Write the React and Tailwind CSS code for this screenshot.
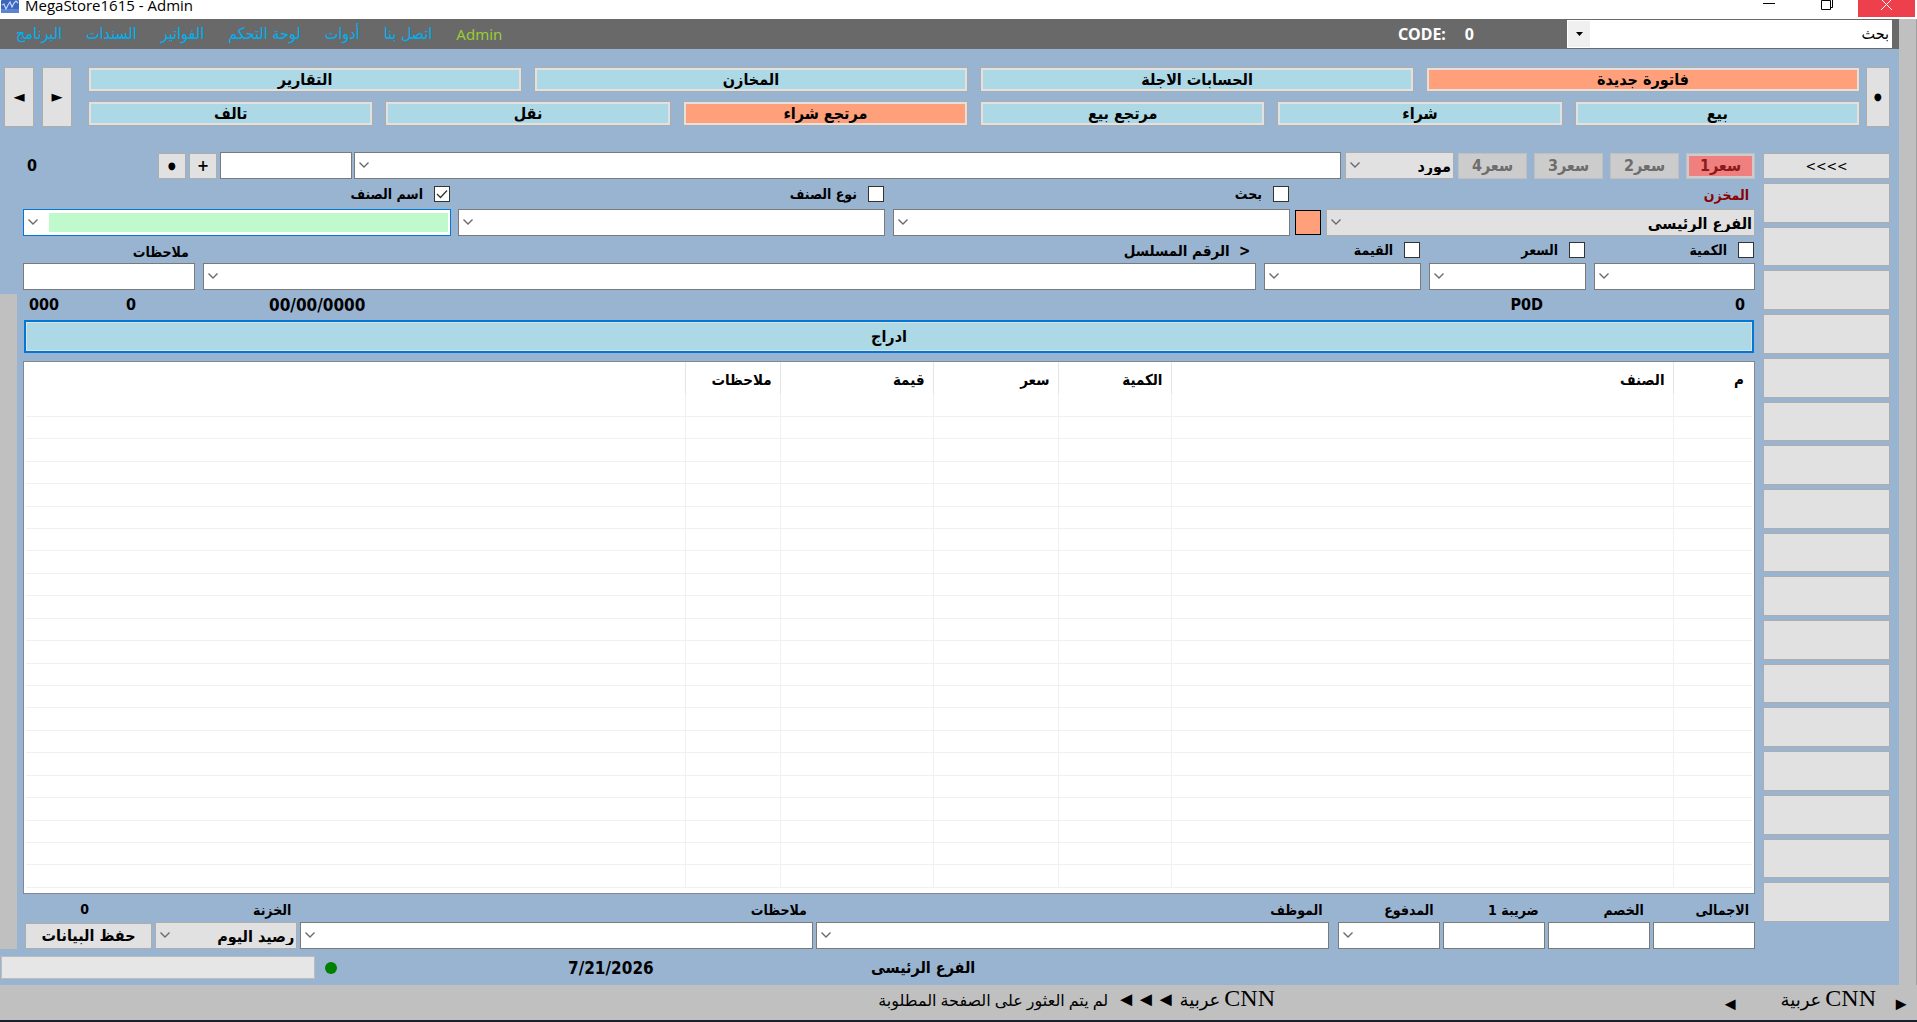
import React from 'react';
import clsx from 'clsx';

const mainTabs = [
  { name: 'فاتورة جديدة', active: true },
  { name: 'الحسابات الاجلة' },
  { name: 'المخازن' },
  { name: 'التقارير' },
];

const invoiceTabs = [
  { name: 'بيع' },
  { name: 'شراء' },
  { name: 'مرتجع بيع' },
  { name: 'مرتجع شراء', active: true },
  { name: 'نقل' },
  { name: 'تالف' },
];

const menuItems = ['البرنامج', 'السندات', 'الفواتير', 'لوحة التحكم', 'أدوات', 'اتصل بنا'];

const columns = [
  { name: 'م', width: 'w-[79px]' },
  { name: 'الصنف', width: 'w-[502px]' },
  { name: 'الكمية', width: 'w-[113px]' },
  { name: 'سعر', width: 'w-[125px]' },
  { name: 'قيمة', width: 'w-[153px]' },
  { name: 'ملاحظات', width: 'w-[95px]' },
  { name: '', width: '' },
];

const Chevron = () => (
  <svg className="absolute left-[3px] top-2 pointer-events-none" width="12" height="8" viewBox="0 0 12 8">
    <path d="M1.5 1.5 L6 6 L10.5 1.5" fill="none" stroke="#6b6b6b" strokeWidth="1.4" />
  </svg>
);

const TabButton = ({ name, active }) => (
  <button
    className={clsx(
      'flex-1 h-[25px] border border-[#adadad] leading-none shadow-[inset_0_0_0_2px_#e1e1e1]',
      active ? 'bg-[#ffa07a]' : 'bg-[#add8e6]'
    )}
  >
    {name}
  </button>
);

const GrayButton = ({ children, className, ...props }) => (
  <button className={clsx('bg-[#e1e1e1] border border-[#adadad] leading-none', className)} {...props}>
    {children}
  </button>
);

// look: plain (white), gray (flat list) or focus (blue border, green text area)
const Combo = ({ id, label, value = '', look = 'plain', className }) => (
  <div
    className={clsx(
      'relative flex h-[27px] border',
      look === 'plain' && 'bg-white border-[#7a7a7a]',
      look === 'gray' && 'bg-[#e1e1e1] border-[#adadad]',
      look === 'focus' && 'bg-white border-[#0078d7]',
      className
    )}
  >
    <select
      id={id}
      aria-label={label}
      className={clsx(
        'flex-1 min-w-0 appearance-none outline-none pr-0.5 leading-none',
        look === 'gray' && 'pt-0.5',
        look === 'focus' && 'bg-[#c0f9cb] ml-[25px] mr-0.5 my-[3px]'
      )}
    >
      <option>{value}</option>
    </select>
    <Chevron />
  </div>
);

const TextBox = ({ id, label, className }) => (
  <input
    id={id}
    type="text"
    aria-label={label}
    className={clsx('h-[27px] w-full min-w-0 bg-white border border-[#7a7a7a] px-1 outline-none', className)}
  />
);

const Check = ({ children, checked }) => (
  <label className="flex items-center gap-[11px] pr-px">
    <span className="relative size-4">
      <input
        type="checkbox"
        defaultChecked={checked}
        className="block size-4 appearance-none bg-white border border-[#333]"
      />
      {checked && (
        <svg className="absolute inset-0 pointer-events-none" width="16" height="16" viewBox="0 0 16 16">
          <path d="M3 8 L6.5 11.5 L13 4.5" fill="none" stroke="#333" strokeWidth="1.3" />
        </svg>
      )}
    </span>
    {children}
  </label>
);

const Field = ({ head, children, size = 'h-[27px]', className }) => (
  <div className={clsx('flex flex-col min-w-0', className)}>
    <div className={clsx('flex items-center text-[14px] leading-none', size)}>{head}</div>
    {children}
  </div>
);

const TitleBar = () => (
  <header dir="ltr" className="flex h-[19px] bg-white overflow-hidden font-['Open_Sans',sans-serif] font-normal text-[15px]">
    <svg className="ml-px shrink-0" width="18" height="13" viewBox="0 0 18 13">
      <rect width="18" height="13" rx="1" fill="#3c66bd" />
      <rect y="9" width="18" height="4" fill="#5d84d0" />
      <path d="M1 5 L3 4 L5 9 L7 5 L9 2 L11 7 L13 3 L15 1 L17 3" fill="none" stroke="#c3d6fa" strokeWidth="1.2" />
    </svg>
    <h1 className="ml-[6px] leading-[11px] text-black">MegaStore1615 - Admin</h1>
    <div className="flex ml-auto mr-0.5">
      <button aria-label="Minimize" className="w-[58px] h-[17px]">
        <svg width="58" height="17" viewBox="0 0 58 17">
          <path d="M21 3.5 H33" stroke="#000" />
        </svg>
      </button>
      <button aria-label="Restore" className="w-[58px] h-[17px]">
        <svg width="58" height="17" viewBox="0 0 58 17">
          <path d="M21.5 0.5 H30.5 V9.5 H21.5 Z M32.5 0 V7.5 H31" fill="none" stroke="#000" />
        </svg>
      </button>
      <button aria-label="Close" className="w-[57px] h-[17px] bg-[#ee404c]">
        <svg width="57" height="17" viewBox="0 0 57 17">
          <path d="M23 -1 L34 10 M34 -1 L23 10" stroke="#fff" />
        </svg>
      </button>
    </div>
  </header>
);

const MenuBar = () => (
  <div className="flex items-center h-[30px] bg-[#696969] pr-[7px] pl-4">
    <div className="relative flex w-[325px] h-[28px] bg-white">
      <select aria-label="بحث" className="flex-1 appearance-none outline-none pr-[3px] text-[16px] font-normal text-black">
        <option>بحث</option>
      </select>
      <span className="absolute left-px top-px bottom-px w-[22px] bg-[#f0f0f0] flex items-center justify-center pointer-events-none">
        <svg width="7" height="4" viewBox="0 0 7 4">
          <path d="M0 0 H7 L3.5 4 Z" fill="#000" />
        </svg>
      </span>
    </div>
    <p dir="ltr" className="flex gap-[19px] mr-[93px] text-white font-['Noto_Sans',sans-serif] text-[16px]">
      <span>CODE:</span>
      <span>0</span>
    </p>
    <nav dir="ltr" className="flex gap-6 mr-auto font-normal text-[#00b0f0] font-['DejaVu_Sans_Condensed','DejaVu_Sans',sans-serif]">
      {menuItems.map((item) => (
        <a key={item} href="#">{item}</a>
      ))}
      <a href="#" className="text-[#9acd32] font-['Noto_Sans',sans-serif] text-[15px]">Admin</a>
    </nav>
  </div>
);

const TabsArea = () => (
  <div className="flex pt-[18px] pr-[9px] pl-1">
    <GrayButton className="w-6 h-[60px] ml-1.5 text-[10px]">●</GrayButton>
    <div className="flex-1 flex flex-col gap-[9px]">
      <div className="flex gap-3">
        {mainTabs.map((tab) => <TabButton key={tab.name} {...tab} />)}
      </div>
      <div className="flex gap-3">
        {invoiceTabs.map((tab) => <TabButton key={tab.name} {...tab} />)}
      </div>
    </div>
    <div className="flex gap-2 mr-4">
      <GrayButton className="w-[30px] h-[60px]">►</GrayButton>
      <GrayButton className="w-[30px] h-[60px]">◄</GrayButton>
    </div>
  </div>
);

const SideButtons = () => (
  <div className="flex flex-col gap-1 w-[127px] ml-2 mb-[27px] shrink-0">
    <GrayButton className="h-[26px] mt-px font-normal text-[14px]" dir="ltr">&lt;&lt;&lt;&lt;</GrayButton>
    {Array.from({ length: 17 }, (_, i) => (
      <GrayButton key={i} className="flex-1" aria-label={`زر ${i + 1}`} />
    ))}
  </div>
);

const PartyRow = () => (
  <div className="flex pl-[23px]">
    <div className="flex gap-[7px] text-[#6d6d6d]">
      <button className="w-[69px] h-[26px] mt-px border border-[#bfbfbf] bg-[#f08080] text-[#8b1a1a] leading-none shadow-[inset_0_0_0_2px_#cccccc]">
        سعر1
      </button>
      {['سعر2', 'سعر3', 'سعر4'].map((p) => (
        <button key={p} disabled className="w-[69px] h-[26px] mt-px border border-[#bfbfbf] bg-[#cccccc] leading-none">
          {p}
        </button>
      ))}
    </div>
    <Combo look="gray" value="مورد" label="نوع العميل" className="w-[109px] mr-1" />
    <Combo label="اسم المورد" className="flex-1 mr-1" />
    <div className="w-[132px] mr-0.5">
      <TextBox label="كود المورد" />
    </div>
    <GrayButton className="w-7 h-[26px] mt-px mr-[3px]">+</GrayButton>
    <GrayButton className="w-7 h-[26px] mt-px mr-[3px] text-[10px]">●</GrayButton>
    <span dir="ltr" className="w-[135px] pl-1 pt-0.5">0</span>
  </div>
);

const ItemRows = () => (
  <div className="pl-[23px]">
    <div className="grid grid-cols-[429fr_26px_397fr_430fr_430fr] gap-x-[5px]">
      <Field size="h-[30px]" head={<label htmlFor="store" className="pr-1.5 pt-0.5 text-[#8b0000]">المخزن</label>}>
        <Combo id="store" look="gray" value="الفرع الرئيسى" />
      </Field>
      <button aria-label="لون" className="mt-[31px] h-[25px] bg-[#ffa07a] border border-black" />
      <Field size="h-[30px]" head={<Check>بحث</Check>}>
        <Combo label="بحث" />
      </Field>
      <Field size="h-[30px]" className="mr-[3px]" head={<Check>نوع الصنف</Check>}>
        <Combo label="نوع الصنف" />
      </Field>
      <Field size="h-[30px]" className="mr-0.5" head={<Check checked>اسم الصنف</Check>}>
        <Combo look="focus" label="اسم الصنف" />
      </Field>
    </div>
    <div className="grid grid-cols-[161fr_157fr_157fr_1054fr_172fr] gap-x-2">
      <Field head={<Check>الكمية</Check>}>
        <Combo label="الكمية" />
      </Field>
      <Field head={<Check>السعر</Check>}>
        <Combo label="السعر" />
      </Field>
      <Field head={<Check>القيمة</Check>}>
        <Combo label="القيمة" />
      </Field>
      <Field head={<label htmlFor="serial" className="pr-1.5 pt-1 text-[15px]">&lt;&nbsp; الرقم المسلسل</label>}>
        <Combo id="serial" />
      </Field>
      <Field head={<label htmlFor="notes" className="pr-1.5 pt-1">ملاحظات</label>}>
        <TextBox id="notes" />
      </Field>
    </div>
  </div>
);

const ItemsTable = () => (
  <div className="mt-2 h-[533px] bg-white border border-[#828790] px-0.5">
    <table className="w-full h-[526px] table-fixed border-collapse">
      <thead>
        <tr className="h-8">
          {columns.map((col, i) => (
            <th
              key={i}
              className={clsx('p-0 pr-2 pt-1 text-right align-middle text-[15px] leading-none border-[#e5e5e5]', i < 6 && 'border-l', col.width)}
            >
              {col.name}
            </th>
          ))}
        </tr>
      </thead>
      <tbody>
        {Array.from({ length: 22 }, (_, r) => (
          <tr key={r} className="h-[22px] border-b border-[#f0f0f0]">
            {columns.map((col, i) => (
              <td key={i} className={clsx('p-0 border-[#f0f0f0]', i < 6 && 'border-l')} />
            ))}
          </tr>
        ))}
      </tbody>
    </table>
  </div>
);

const TotalsRow = () => (
  <div className="grid grid-cols-[102fr_102fr_102fr_102fr_518fr_512fr_142fr_127fr] gap-x-[3px] pl-0.5">
    <Field size="h-7" head={<label htmlFor="total" className="pr-1.5 pt-1">الاجمالى</label>}>
      <TextBox id="total" />
    </Field>
    <Field size="h-7" head={<label htmlFor="discount" className="pr-1.5 pt-1">الخصم</label>}>
      <TextBox id="discount" />
    </Field>
    <Field size="h-7" head={<label htmlFor="tax" className="pr-1.5 pt-1">ضريبة 1</label>}>
      <TextBox id="tax" />
    </Field>
    <Field size="h-7" head={<label htmlFor="paid" className="pr-1.5 pt-1">المدفوع</label>}>
      <Combo id="paid" />
    </Field>
    <Field size="h-7" className="mr-1.5" head={<label htmlFor="employee" className="pr-1.5 pt-1">الموظف</label>}>
      <Combo id="employee" />
    </Field>
    <Field size="h-7" head={<label htmlFor="remarks" className="pr-1.5 pt-1">ملاحظات</label>}>
      <Combo id="remarks" />
    </Field>
    <Field size="h-7" head={<label htmlFor="safe" className="pr-1.5 pt-1">الخزنة</label>}>
      <Combo id="safe" look="gray" value="رصيد اليوم" />
    </Field>
    <Field size="h-7" head={<span className="mx-auto pr-2 pt-0.5">0</span>}>
      <GrayButton className="h-[26px] mt-px">حفظ البيانات</GrayButton>
    </Field>
  </div>
);

const StatusBar = () => (
  <div dir="ltr" className="flex items-center h-[35px] pl-px pt-0.5">
    <div className="w-[314px] h-[23px] bg-[#e6e6e6] border border-[#bcbcbc]" />
    <span className="size-3 rounded-full bg-[#008000] ml-2.5" />
    <span className="ml-[231px] w-[303px] text-[17px]">7/21/2026</span>
    <span>الفرع الرئيسى</span>
  </div>
);

const Ticker = () => (
  <footer className="flex items-center h-[37px] bg-[#c0c0c0] border-b-2 border-[#1a212b] pr-[7px] pb-1.5 font-['Liberation_Serif','DejaVu_Sans',serif] font-normal text-black">
    <button className="text-[18px] w-3 pt-2 leading-none">►</button>
    <a href="#" className="mr-[22px] w-[126px] whitespace-nowrap">
      <span className="text-[24px]">CNN</span> <span className="text-[18px]">عربية</span>
    </a>
    <button className="text-[18px] w-3 pt-2 mr-[11px] leading-none">◄</button>
    <p className="mr-[452px] whitespace-nowrap">
      <span className="text-[24px]">CNN</span> <span className="text-[18px]">عربية</span>{' '}
      <span className="text-[20px]">◄◄◄</span>{' '}
      <span className="mr-1 text-[16px]">لم يتم العثور على الصفحة المطلوبة</span>
    </p>
  </footer>
);

const App = () => {
  return (
    <div
      dir="rtl"
      className="min-h-screen flex flex-col bg-[#99b4d1] text-black text-[16px] leading-6 font-bold font-['DejaVu_Sans_Condensed','DejaVu_Sans',sans-serif]"
    >
      <TitleBar />
      <div className="flex flex-1">
        <div className="w-[18px] shrink-0 bg-[#c0c0c0] border-r border-[#a0a0a0]" />
        <main className="flex-1 min-w-0">
          <MenuBar />
          <TabsArea />
          <div className="flex mt-[25px] pr-[9px]">
            <SideButtons />
            <div className="flex-1 min-w-0">
              <PartyRow />
              <ItemRows />
              <div className="flex mt-1">
                <div className="flex-1 min-w-0">
                  <div className="flex h-[26px] leading-[22px] pr-[10px] pl-1.5">
                    <span>0</span>
                    <span className="mr-[192px]">P0D</span>
                    <span dir="ltr" className="mr-auto text-[17px]">00/00/0000</span>
                    <span className="mr-[133px]">0</span>
                    <span className="mr-[67px]">000</span>
                  </div>
                  <div className="px-px">
                    <button className="block w-full h-[33px] bg-[#add8e6] border-2 border-[#0078d7] leading-none shadow-[inset_0_0_0_1px_#e1e1e1]">
                      ادراج
                    </button>
                  </div>
                  <ItemsTable />
                  <TotalsRow />
                </div>
                <div className="w-[17px] mr-1.5 bg-[#c0c0c0]" />
              </div>
            </div>
          </div>
          <StatusBar />
        </main>
      </div>
      <Ticker />
    </div>
  );
};

export default App;
